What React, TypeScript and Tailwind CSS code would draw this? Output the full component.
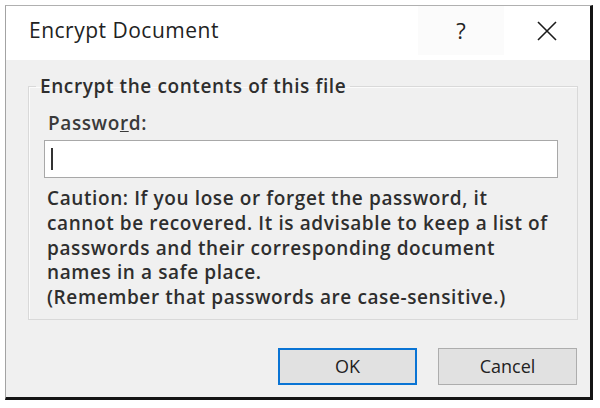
import React from 'react'

function CloseIcon() {
  return (
    <svg width="20" height="20" viewBox="0 0 20 20" fill="none" stroke="#1b1b1b" strokeWidth="1.6">
      <path d="M1 1 L19 19 M19 1 L1 19" />
    </svg>
  )
}

export default function App() {
  return (
    <div className="w-[600px] h-[408px] bg-white pl-[5px] pt-[5px]" style={{ fontFamily: '"Open Sans", "Noto Sans", sans-serif' }}>
      <div className="w-[588px] h-[395px] flex flex-col border-l border-t border-l-[#a3a3a3] border-t-[#b0b0b0] border-r-[3px] border-b-[3px] border-r-[#141414] border-b-[#141414] bg-[#f0f0f0]">
        {/* title bar */}
        <div className="h-[54px] bg-white flex items-center shrink-0 pb-[5px]">
          <span className="pl-[23px] text-[21px] text-[#222] flex-1 tracking-[0.5px]">Encrypt Document</span>
          <button className="w-[86px] h-full flex items-center justify-center text-[22px] font-medium text-[#222] bg-[#fbfbfb]">?</button>
          <button className="w-[86px] h-full flex items-center justify-center">
            <CloseIcon />
          </button>
        </div>

        {/* body */}
        <div className="flex-1 flex flex-col pl-[22px] pr-[12px] pt-[14px]">
          <fieldset className="border border-[#d9d9d9] shadow-[inset_1px_1px_0_#fbfbfb] h-[246px] pl-[18px] pr-[19px] font-semibold text-[19px] tracking-[0.6px] text-[#2e2e2e]">
            <legend className="ml-[-11px] px-[4px] leading-[24px]">
              Encrypt the contents of this file
            </legend>
            <div className="pt-[15px] leading-[20px] text-[#3a3a3a] pl-[1px]">
              Pass<span>wo</span><span className="underline">r</span>d:
            </div>
            <div className="mt-[7px] ml-[-3px] h-[38px] bg-white border border-[#a8a8a8] flex items-center pl-[6px]">
              <div className="w-[2px] h-[22px] bg-[#333]" />
            </div>
            <p className="mt-[8px] leading-[24.75px]">
              Caution: If you lose or forget the password, it<br />
              cannot be recovered. It is advisable to keep a list of<br />
              passwords and their corresponding document<br />
              names in a safe place.<br />
              (Remember that passwords are case-sensitive.)
            </p>
          </fieldset>

          <div className="flex justify-end gap-[21px] pt-[28px] pr-[1px]">
            <button className="w-[139px] h-[37px] bg-[#e1e1e1] border-2 border-[#0a74d4] text-[18px] font-medium text-[#222]">OK</button>
            <button className="w-[139px] h-[37px] bg-[#e1e1e1] border border-[#adadad] text-[18px] font-medium text-[#222]">Cancel</button>
          </div>
        </div>
      </div>
    </div>
  )
}
